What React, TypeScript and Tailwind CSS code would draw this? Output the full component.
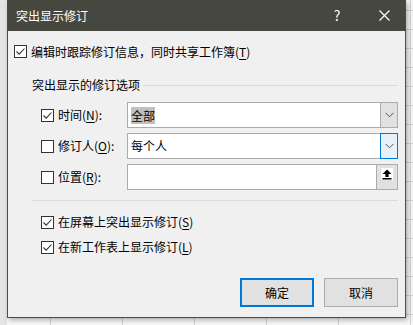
import React from 'react';

const font = { fontFamily: '"Noto Sans CJK SC", "Noto Sans", sans-serif' };

function CheckBox({ checked }: { checked: boolean }) {
    return (
        <span className="w-[13px] h-[13px] border border-[#333333] bg-white flex items-center justify-center shrink-0">
            {checked && (
                <svg width="11" height="11" viewBox="0 0 11 11">
                    <path d="M1.5 5.5 L4.2 8.2 L9.5 2.5" fill="none" stroke="#333" strokeWidth="1.1" />
                </svg>
            )}
        </span>
    );
}

function Key({ k }: { k: string }) {
    return <span className="underline underline-offset-[2px]">{k}</span>;
}

function Chevron() {
    return (
        <svg width="9" height="6" viewBox="0 0 9 6">
            <path d="M0.5 0.8 L4.5 4.8 L8.5 0.8" fill="none" stroke="#555" strokeWidth="1" />
        </svg>
    );
}

function UploadIcon() {
    return (
        <span className="w-[12px] h-[12px] bg-white flex items-center justify-center">
            <svg width="10" height="11" viewBox="0 0 10 11">
                <path d="M5 0.5 L9.5 5 L6.6 5 L6.6 8 L3.4 8 L3.4 5 L0.5 5 Z" fill="#000" />
                <rect x="0.5" y="9" width="9" height="1.5" fill="#000" />
            </svg>
        </span>
    );
}

export default function App() {
    return (
        <div
            className="relative w-[413px] h-[325px] overflow-hidden bg-[#f7f7f7] bg-[linear-gradient(#d4d4d4_1px,transparent_1px),linear-gradient(90deg,#d4d4d4_1px,transparent_1px)] bg-[size:72px_19px] bg-[position:50px_10px]"
            style={font}
        >
            {/* row header strip */}
            <div className="absolute left-0 top-0 w-[7px] h-full bg-[#e4e4e4]" />

            {/* Dialog */}
            <div className="absolute left-[7px] top-0 w-[399px] h-[318px] border border-[#4a4a4a] border-t-0 bg-[#f0f0f0] flex flex-col shadow-[2px_2px_5px_rgba(0,0,0,0.3)] text-[12px] text-black">
                {/* Title bar */}
                <div className="h-[31px] bg-[#46473f] flex items-center text-white shrink-0">
                    <span className="pl-[8px] text-[12px]">突出显示修订</span>
                    <span className="ml-auto w-[20px] text-center text-[14px]">?</span>
                    <svg className="ml-[32px] mr-[15px]" width="11" height="11" viewBox="0 0 11 11">
                        <path d="M0.5 0.5 L10.5 10.5 M10.5 0.5 L0.5 10.5" stroke="#fff" strokeWidth="1.2" />
                    </svg>
                </div>

                {/* Track changes */}
                <div className="mt-[13px] h-[15px] flex items-center pl-[6px] gap-[4px]">
                    <CheckBox checked />
                    <span>编辑时跟踪修订信息，同时共享工作簿(<Key k="T" />)</span>
                </div>

                {/* Group header */}
                <div className="mt-[18px] h-[16px] flex items-center pl-[24px] pr-[7px]">
                    <span>突出显示的修订选项</span>
                    <span className="flex-1 h-px bg-[#dcdcdc] ml-[3px]" />
                </div>

                {/* Option rows */}
                <div className="mt-[9px] flex flex-col gap-[5px] pl-[33px] pr-[7px]">
                    <div className="flex items-center h-[26px]">
                        <div className="w-[86px] flex items-center gap-[4px]">
                            <CheckBox checked />
                            <span>时间(<Key k="N" />):</span>
                        </div>
                        <div className="flex-1 h-full border border-[#ababab] bg-white flex">
                            <div className="flex-1 flex items-center pl-[3px]">
                                <span className="bg-[#c0c0c0] leading-[17px]">全部</span>
                            </div>
                            <div className="w-[17px] bg-[#e1e1e1] border-l border-[#ababab] flex items-center justify-center">
                                <Chevron />
                            </div>
                        </div>
                    </div>

                    <div className="flex items-center h-[26px]">
                        <div className="w-[86px] flex items-center gap-[4px]">
                            <CheckBox checked={false} />
                            <span>修订人(<Key k="O" />):</span>
                        </div>
                        <div className="flex-1 h-full border border-[#ababab] bg-white flex">
                            <div className="flex-1 flex items-center pl-[3px]">
                                <span>每个人</span>
                            </div>
                            <div className="w-[18px] -my-px -mr-px bg-[#e5f1fb] border border-[#0078d7] flex items-center justify-center">
                                <Chevron />
                            </div>
                        </div>
                    </div>

                    <div className="flex items-center h-[26px]">
                        <div className="w-[86px] flex items-center gap-[4px]">
                            <CheckBox checked={false} />
                            <span>位置(<Key k="R" />):</span>
                        </div>
                        <div className="flex-1 h-full border border-[#ababab] bg-white flex">
                            <div className="flex-1" />
                            <div className="w-[21px] bg-[#e1e1e1] border-l border-[#ababab] flex items-start justify-center pt-[3px]">
                                <UploadIcon />
                            </div>
                        </div>
                    </div>
                </div>

                {/* Separator */}
                <div className="mt-[10px] ml-[24px] mr-[7px] h-px bg-[#dcdcdc]" />

                {/* Display options */}
                <div className="mt-[13px] h-[16px] flex items-center pl-[33px] gap-[4px]">
                    <CheckBox checked />
                    <span>在屏幕上突出显示修订(<Key k="S" />)</span>
                </div>
                <div className="mt-[9px] h-[16px] flex items-center pl-[33px] gap-[4px]">
                    <CheckBox checked />
                    <span>在新工作表上显示修订(<Key k="L" />)</span>
                </div>

                {/* Buttons */}
                <div className="mt-[23px] flex justify-end gap-[10px] pr-[7px]">
                    <button className="w-[74px] h-[29px] border-2 border-[#0078d7] bg-[#e1e1e1] text-[12px]">确定</button>
                    <button className="w-[74px] h-[29px] border border-[#adadad] bg-[#e1e1e1] text-[12px]">取消</button>
                </div>
            </div>
        </div>
    );
}
